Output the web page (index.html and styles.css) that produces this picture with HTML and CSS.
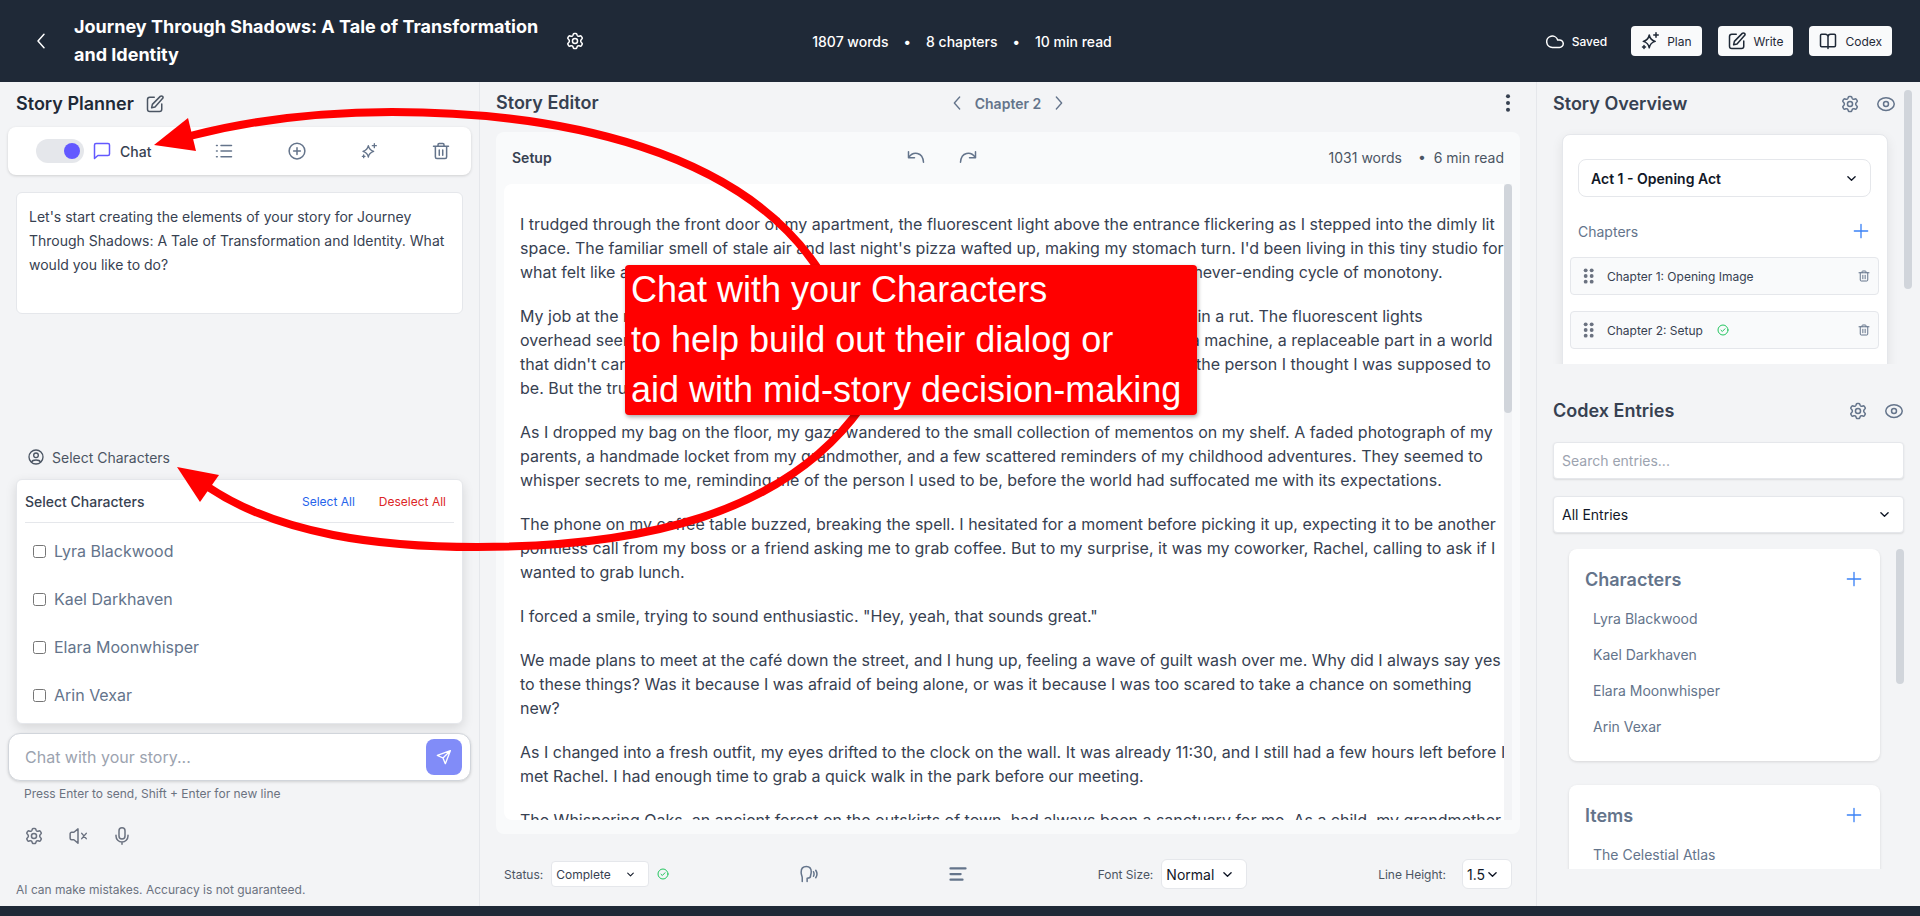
FILE: index.html
```html
<!DOCTYPE html>
<html lang="en">
<head>
  <meta charset="UTF-8">
  <meta name="viewport" content="width=device-width, initial-scale=1.0">
  <title>Journey Through Shadows</title>
  <link rel="stylesheet" href="styles.css">
</head>
<body>

  <!-- icon set -->
  <svg class="sprite" aria-hidden="true">
    <symbol id="i-gear" viewBox="0 0 24 24">
      <path d="M21.3 7.1L20.8 6.3C20.45 5.64 20.26 5.3 19.95 5.18C19.63 5.05 19.27 5.16 18.55 5.36L17.33 5.7C16.87 5.81 16.39 5.75 15.97 5.53L15.64 5.34C15.28 5.11 15 4.77 14.85 4.37L14.51 3.38C14.29 2.72 14.18 2.39 13.92 2.2C13.66 2 13.31 2 12.62 2H11.5C10.81 2 10.46 2 10.2 2.2C9.94 2.39 9.83 2.72 9.61 3.38L9.28 4.37C9.12 4.77 8.85 5.11 8.49 5.34L8.15 5.53C7.73 5.75 7.25 5.81 6.79 5.7L5.57 5.36C4.86 5.16 4.5 5.05 4.18 5.18C3.86 5.3 3.67 5.64 3.3 6.28L2.8 7.14C2.46 7.75 2.28 8.05 2.32 8.38C2.35 8.7 2.58 8.96 3.05 9.48L4.08 10.63C4.34 10.95 4.52 11.5 4.52 12C4.52 12.5 4.34 13.06 4.08 13.38L3.05 14.54C2.58 15.06 2.35 15.32 2.32 15.64C2.28 15.96 2.46 16.27 2.8 16.87L3.3 17.73C3.67 18.38 3.86 18.7 4.18 18.83C4.5 18.96 4.86 18.86 5.57 18.66L6.79 18.31C7.25 18.2 7.73 18.27 8.15 18.48L8.49 18.68C8.85 18.9 9.12 19.24 9.28 19.64L9.61 20.64C9.83 21.3 9.94 21.63 10.2 21.82C10.46 22 10.81 22 11.5 22H12.62C13.31 22 13.66 22 13.92 21.82C14.18 21.63 14.29 21.3 14.51 20.64L14.85 19.64C15 19.24 15.28 18.9 15.64 18.68L15.97 18.48C16.39 18.27 16.87 18.2 17.33 18.31L18.55 18.66C19.27 18.86 19.63 18.96 19.95 18.83C20.26 18.7 20.45 18.38 20.82 17.73L21.32 16.87C21.67 16.27 21.84 15.96 21.8 15.64C21.77 15.32 21.54 15.06 21.07 14.54L20.04 13.38C19.79 13.06 19.6 12.5 19.6 12C19.6 11.5 19.79 10.95 20.04 10.63L21.07 9.48C21.54 8.96 21.77 8.7 21.8 8.38C21.84 8.05 21.67 7.75 21.3 7.1Z"/>
      <circle cx="12" cy="12" r="3.4"/>
    </symbol>
    <symbol id="i-left" viewBox="0 0 24 24"><path d="M16 3L8 12l8 9"/></symbol>
    <symbol id="i-right" viewBox="0 0 24 24"><path d="M8 3l8 9-8 9"/></symbol>
    <symbol id="i-cloud" viewBox="0 0 24 24"><path d="M18 20.500H8.500a7.500 7.500 0 1 1 7-10H18a5 5 0 1 1 0 10z"/></symbol>
    <symbol id="i-edit" viewBox="0 0 24 24"><path d="M11 3H5a3 3 0 0 0-3 3v13a3 3 0 0 0 3 3h13a3 3 0 0 0 3-3v-7"/><path d="M19 1.8a2 2 0 0 1 3 3L12 16l-4.5 1 1-4.500z"/></symbol>
    <symbol id="i-book" viewBox="0 0 24 24"><path d="M12 6.500v15.500M12 19.500H3.500a1.500 1.500 0 0 1-1.500-1.500V4.500A1.500 1.500 0 0 1 3.500 3H8.500A3.500 3.500 0 0 1 12 6.500 3.500 3.500 0 0 1 15.500 3h5A1.500 1.500 0 0 1 22 4.500V18a1.500 1.500 0 0 1-1.500 1.500z"/></symbol>
    <symbol id="i-sparkles" viewBox="0 0 24 24"><path d="M11 4c1 5.200 2.800 7 8 8.500-5.200 1.500-7 3.300-8 8.500-1-5.200-2.800-7-8-8.500 5.200-1.500 7-3.300 8-8.500z"/><path d="M20 1v6M17 4h6M4 18v4M2 20h4"/></symbol>
    <symbol id="i-chat" viewBox="0 0 24 24"><path d="M22 16a2 2 0 0 1-2 2H6.500L2 22V4a2 2 0 0 1 2-2h16a2 2 0 0 1 2 2z"/></symbol>
    <symbol id="i-list" viewBox="0 0 24 24"><path d="M8 4.500h14M8 12h14M8 19.500h14M2 4.500h1M2 12h1M2 19.500h1"/></symbol>
    <symbol id="i-add" viewBox="0 0 24 24"><circle cx="12" cy="12" r="10.500"/><path d="M12 7.500v9M7.500 12h9"/></symbol>
    <symbol id="i-trash" viewBox="0 0 24 24"><path d="M2 5.500h20M4.500 5.500V20a2 2 0 0 0 2 2h11a2 2 0 0 0 2-2V5.500M8 5.500V3.500A1.500 1.500 0 0 1 9.500 2h5A1.500 1.500 0 0 1 16 3.500v2M9.700 10.500v7M14.300 10.500v7"/></symbol>
    <symbol id="i-user" viewBox="0 0 24 24"><circle cx="12" cy="12" r="10.500"/><circle cx="12" cy="9.500" r="3.500"/><path d="M5.500 19.500c1.500-4 11.500-4 13 0"/></symbol>
    <symbol id="i-send" viewBox="0 0 24 24"><path d="M21.500 2.500L2 9.500l8.500 4L14 22z M21.500 2.500l-11 11"/></symbol>
    <symbol id="i-mute" viewBox="0 0 24 24"><path d="M12 2.500v19L6.500 17H3.500A2 2 0 0 1 1.500 15V9a2 2 0 0 1 2-2h3zM17 8.500l6 7M23 8.500l-6 7"/></symbol>
    <symbol id="i-mic" viewBox="0 0 24 24"><rect x="8" y="1" width="8" height="15" rx="4"/><path d="M4 11v1a8 8 0 0 0 16 0v-1M12 20v3"/></symbol>
    <symbol id="i-undo" viewBox="0 0 24 24"><path d="M2 5v8h8M2.500 12.500C8 4 21 5 22 19"/></symbol>
    <symbol id="i-redo" viewBox="0 0 24 24"><path d="M22 5v8h-8M21.500 12.500C16 4 3 5 2 19"/></symbol>
    <symbol id="i-eye" viewBox="0 0 24 24"><path d="M1 12c0-4 5-8.500 11-8.500S23 8 23 12s-5 8.500-11 8.500S1 16 1 12z"/><circle cx="12" cy="12" r="3.300"/></symbol>
    <symbol id="i-plus" viewBox="0 0 24 24"><path d="M12 2v20M2 12h20"/></symbol>
    <symbol id="i-check" viewBox="0 0 24 24"><circle cx="12" cy="12" r="10"/><path d="M8 12.500l2.700 2.500L16 9.500"/></symbol>
    <symbol id="i-voice" viewBox="0 0 24 24"><path d="M3 22v-5c0-2-1.500-4-1.500-7.500C1.500 4 5 2 8.500 2c4 0 6.500 3 6.500 7 0 3-1 4-1 6s-1 2.500-4.500 2.500V22M18 9c1 2 1 4 0 6M21 7c2 3 2 7 0 10"/></symbol>
    <symbol id="i-align" viewBox="0 0 24 24"><path d="M2 4.500h20M2 12h13.500M2 19.500h16"/></symbol>
    <symbol id="i-dots" viewBox="0 0 24 24"><circle cx="12" cy="3" r="2.700"/><circle cx="12" cy="12" r="2.700"/><circle cx="12" cy="21" r="2.700"/></symbol>
    <symbol id="i-grip" viewBox="0 0 24 24"><circle cx="7" cy="3.500" r="2.900"/><circle cx="16" cy="3.500" r="2.900"/><circle cx="7" cy="12" r="2.900"/><circle cx="16" cy="12" r="2.900"/><circle cx="7" cy="20.500" r="2.900"/><circle cx="16" cy="20.500" r="2.900"/></symbol>
  </svg>

  <header class="topbar">
    <div class="topbar-left">
      <button class="icon-btn" aria-label="Back"><svg class="icon"><use href="#i-left"/></svg></button>
      <h1>Journey Through Shadows: A Tale of Transformation and Identity</h1>
      <button class="icon-btn" aria-label="Story settings"><svg class="icon"><use href="#i-gear"/></svg></button>
    </div>
    <div class="topbar-stats">
      <span>1807 words</span><span>•</span><span>8 chapters</span><span>•</span><span>10 min read</span>
    </div>
    <div class="topbar-right">
      <span class="saved"><svg class="icon"><use href="#i-cloud"/></svg>Saved</span>
      <button class="mode-btn"><svg class="icon"><use href="#i-sparkles"/></svg>Plan</button>
      <button class="mode-btn"><svg class="icon"><use href="#i-edit"/></svg>Write</button>
      <button class="mode-btn"><svg class="icon"><use href="#i-book"/></svg>Codex</button>
    </div>
  </header>

  <main class="layout">

    <!-- planner -->
    <section class="planner">
      <div class="planner-head">
        <h2>Story Planner</h2>
        <button class="icon-btn" aria-label="Edit"><svg class="icon"><use href="#i-edit"/></svg></button>
      </div>
      <div class="toolbar">
        <label class="chat-toggle">
          <input type="checkbox" class="switch" checked>
          <svg class="icon chat-icon"><use href="#i-chat"/></svg>
          Chat
        </label>
        <button class="icon-btn" aria-label="List"><svg class="icon"><use href="#i-list"/></svg></button>
        <button class="icon-btn" aria-label="Add"><svg class="icon"><use href="#i-add"/></svg></button>
        <button class="icon-btn" aria-label="Generate"><svg class="icon icon-sm"><use href="#i-sparkles"/></svg></button>
        <button class="icon-btn" aria-label="Delete"><svg class="icon"><use href="#i-trash"/></svg></button>
      </div>
      <div class="message">Let's start creating the elements of your story for Journey Through Shadows: A Tale of Transformation and Identity. What would you like to do?</div>

      <button class="select-toggle"><svg class="icon icon-sm"><use href="#i-user"/></svg>Select Characters</button>
      <div class="picker">
        <div class="picker-head">
          <h3>Select Characters</h3>
          <button class="link-blue">Select All</button>
          <button class="link-red">Deselect All</button>
        </div>
        <div class="picker-list">
          <label><input type="checkbox">Lyra Blackwood</label>
          <label><input type="checkbox">Kael Darkhaven</label>
          <label><input type="checkbox">Elara Moonwhisper</label>
          <label><input type="checkbox">Arin Vexar</label>
        </div>
      </div>
      <div class="composer">
        <input type="text" placeholder="Chat with your story..." aria-label="Chat with your story">
        <button class="send" aria-label="Send"><svg class="icon icon-sm"><use href="#i-send"/></svg></button>
      </div>
      <p class="hint">Press Enter to send, Shift + Enter for new line</p>
      <div class="planner-tools">
        <button class="icon-btn" aria-label="Settings"><svg class="icon"><use href="#i-gear"/></svg></button>
        <button class="icon-btn" aria-label="Mute"><svg class="icon"><use href="#i-mute"/></svg></button>
        <button class="icon-btn" aria-label="Microphone"><svg class="icon"><use href="#i-mic"/></svg></button>
      </div>
      <p class="disclaimer">AI can make mistakes. Accuracy is not guaranteed.</p>
    </section>

    <!-- editor -->
    <section class="editor">
      <div class="editor-head">
        <h2>Story Editor</h2>
        <div class="chapter-nav">
          <button class="icon-btn" aria-label="Previous chapter"><svg class="icon icon-sm"><use href="#i-left"/></svg></button>
          <span>Chapter 2</span>
          <button class="icon-btn" aria-label="Next chapter"><svg class="icon icon-sm"><use href="#i-right"/></svg></button>
        </div>
        <button class="icon-btn more" aria-label="More"><svg class="icon solid"><use href="#i-dots"/></svg></button>
      </div>
      <div class="page">
        <div class="page-head">
          <h3>Setup</h3>
          <div class="history">
            <button class="icon-btn" aria-label="Undo"><svg class="icon"><use href="#i-undo"/></svg></button>
            <button class="icon-btn" aria-label="Redo"><svg class="icon"><use href="#i-redo"/></svg></button>
          </div>
          <div class="page-stats"><span>1031 words</span><span>•&nbsp; 6 min read</span></div>
        </div>
        <div class="page-body">
          <div class="prose">
            <p>I trudged through the front door of my apartment, the fluorescent light above the entrance flickering as I stepped into the dimly lit<br>space. The familiar smell of stale air and last night's pizza wafted up, making my stomach turn. I'd been living in this tiny studio for<br>what felt like an eternity, and each day was beginning to blend into the next, trapped in a never-ending cycle of monotony.</p>
            <p>My job at the marketing firm was no better, and lately I had only felt more and more stuck in a rut. The fluorescent lights<br>overhead seemed to hum along with my own unhappiness. I was really only a tiny cog in a machine, a replaceable part in a world<br>that didn't care about me or any of my ambitions. I wondered what had ever happened to the person I thought I was supposed to<br>be. But the truth was, I had no idea who that person was.</p>
            <p>As I dropped my bag on the floor, my gaze wandered to the small collection of mementos on my shelf. A faded photograph of my<br>parents, a handmade locket from my grandmother, and a few scattered reminders of my childhood adventures. They seemed to<br>whisper secrets to me, reminding me of the person I used to be, before the world had suffocated me with its expectations.</p>
            <p>The phone on my coffee table buzzed, breaking the spell. I hesitated for a moment before picking it up, expecting it to be another<br>pointless call from my boss or a friend asking me to grab coffee. But to my surprise, it was my coworker, Rachel, calling to ask if I<br>wanted to grab lunch.</p>
            <p>I forced a smile, trying to sound enthusiastic. "Hey, yeah, that sounds great."</p>
            <p>We made plans to meet at the café down the street, and I hung up, feeling a wave of guilt wash over me. Why did I always say yes<br>to these things? Was it because I was afraid of being alone, or was it because I was too scared to take a chance on something<br>new?</p>
            <p>As I changed into a fresh outfit, my eyes drifted to the clock on the wall. It was already 11:30, and I still had a few hours left before I<br>met Rachel. I had enough time to grab a quick walk in the park before our meeting.</p>
            <p>The Whispering Oaks, an ancient forest on the outskirts of town, had always been a sanctuary for me. As a child, my grandmother</p>
          </div>
          <div class="track page-track"><div class="thumb"></div></div>
        </div>
      </div>
      <div class="editor-foot">
        <div class="field">
          <label for="status">Status:</label>
          <select id="status" class="sel-status"><option>Complete</option></select>
          <svg class="icon icon-xs ok"><use href="#i-check"/></svg>
        </div>
        <button class="icon-btn" aria-label="Read aloud"><svg class="icon"><use href="#i-voice"/></svg></button>
        <button class="icon-btn" aria-label="Alignment"><svg class="icon thick"><use href="#i-align"/></svg></button>
        <div class="field">
          <label for="font-size">Font Size:</label>
          <select id="font-size" class="sel-size"><option>Normal</option></select>
        </div>
        <div class="field field-wide">
          <label for="line-height">Line Height:</label>
          <select id="line-height" class="sel-height"><option>1.5</option></select>
        </div>
      </div>
    </section>

    <!-- sidebar -->
    <aside class="sidebar">
      <section class="overview">
        <div class="overview-body">
          <div class="side-head">
            <h2>Story Overview</h2>
            <button class="icon-btn" aria-label="Overview settings"><svg class="icon"><use href="#i-gear"/></svg></button>
            <button class="icon-btn" aria-label="Toggle overview"><svg class="icon"><use href="#i-eye"/></svg></button>
          </div>
          <div class="act">
            <select class="sel-act" aria-label="Act"><option>Act 1 - Opening Act</option></select>
            <div class="act-head">
              <h3>Chapters</h3>
              <button class="icon-btn blue" aria-label="Add chapter"><svg class="icon icon-sm"><use href="#i-plus"/></svg></button>
            </div>
            <ul class="chapters">
              <li>
                <svg class="icon solid grip"><use href="#i-grip"/></svg>
                <span>Chapter 1: Opening Image</span>
                <button class="icon-btn" aria-label="Delete chapter 1"><svg class="icon icon-xs"><use href="#i-trash"/></svg></button>
              </li>
              <li>
                <svg class="icon solid grip"><use href="#i-grip"/></svg>
                <span>Chapter 2: Setup</span>
                <svg class="icon icon-xs ok"><use href="#i-check"/></svg>
                <button class="icon-btn" aria-label="Delete chapter 2"><svg class="icon icon-xs"><use href="#i-trash"/></svg></button>
              </li>
            </ul>
          </div>
        </div>
        <div class="track overview-track"><div class="thumb"></div></div>
      </section>

      <section class="codex">
        <div class="codex-head">
          <h2>Codex Entries</h2>
          <button class="icon-btn" aria-label="Codex settings"><svg class="icon"><use href="#i-gear"/></svg></button>
          <button class="icon-btn" aria-label="Toggle codex"><svg class="icon"><use href="#i-eye"/></svg></button>
        </div>
        <input type="text" class="search" placeholder="Search entries..." aria-label="Search entries">
        <select class="sel-entries" aria-label="Entry type"><option>All Entries</option></select>
        <div class="entries">
          <div class="entries-list">
            <div class="group">
              <div class="group-head">
                <h3>Characters</h3>
                <button class="icon-btn blue" aria-label="Add character"><svg class="icon icon-sm"><use href="#i-plus"/></svg></button>
              </div>
              <ul>
                <li>Lyra Blackwood</li>
                <li>Kael Darkhaven</li>
                <li>Elara Moonwhisper</li>
                <li>Arin Vexar</li>
              </ul>
            </div>
            <div class="group">
              <div class="group-head">
                <h3>Items</h3>
                <button class="icon-btn blue" aria-label="Add item"><svg class="icon icon-sm"><use href="#i-plus"/></svg></button>
              </div>
              <ul>
                <li>The Celestial Atlas</li>
              </ul>
            </div>
          </div>
          <div class="track entries-track"><div class="thumb"></div></div>
        </div>
      </section>
    </aside>
  </main>

  <!-- tutorial callout with arrows -->
  <svg class="arrows" width="1920" height="916" viewBox="0 0 1920 916" aria-hidden="true">
    <path class="arrow-line" d="M190 136C256 119 320 112 392 112C560 112 745 150 822 275"/>
    <path class="arrow-head" d="M154 145L188 118L196 151z"/>
    <path class="arrow-line" d="M208 487C280 535 380 547 477 547C640 547 785 515 862 406"/>
    <path class="arrow-head" d="M177 467L219 475L200 502z"/>
  </svg>
  <div class="callout">Chat with your Characters<br>to help build out their dialog or<br>aid with mid-story decision-making</div>

</body>
</html>
```
FILE: styles.css
```css
* {
  box-sizing: border-box;
}
body {
  margin: 0;
  height: 100vh;
  display: flex;
  flex-direction: column;
  overflow: hidden;
  position: relative;
  padding-bottom: 10px;
  background: #1f2937;
  color: #374151;
  font-family: Inter, "Liberation Sans", sans-serif;
  font-size: 14px;
}
h1, h2, h3, p, ul {
  margin: 0;
  padding: 0;
}
ul {
  list-style: none;
}
button, input, select {
  font: inherit;
  color: inherit;
}
button {
  border: none;
  background: none;
  padding: 0;
  cursor: pointer;
}
h2 {
  font-size: 18px;
  line-height: 28px;
  font-weight: 600;
}
.sprite {
  position: absolute;
  width: 0;
  height: 0;
}
.icon {
  display: block;
  flex: none;
  width: 18px;
  height: 18px;
  overflow: visible;
  fill: none;
  stroke: currentColor;
  stroke-width: 2;
  stroke-linecap: round;
  stroke-linejoin: round;
}
.icon-sm {
  width: 16px;
  height: 16px;
}
.icon-xs {
  width: 12px;
  height: 12px;
}
.solid {
  fill: currentColor;
  stroke: none;
}
.thick {
  stroke-width: 3;
}
.icon-btn {
  display: flex;
  align-items: center;
  justify-content: center;
  color: #64748b;
}
.blue {
  color: #3b82f6;
}
.ok {
  color: #22c55e;
}

/* top bar */
.topbar {
  flex: none;
  height: 82px;
  display: flex;
  align-items: center;
  padding: 0 28px 0 32px;
  color: #fff;
}
.topbar .icon-btn {
  color: #fff;
}
.topbar-left {
  flex: 1;
  display: flex;
  align-items: center;
  gap: 16px;
}
.topbar-left .icon-btn:first-child {
  margin-right: 8px;
}
h1 {
  max-width: 476px;
  font-size: 18px;
  line-height: 28px;
  font-weight: 700;
}
.topbar-stats {
  display: flex;
  gap: 15px;
  font-weight: 500;
}
.topbar-right {
  flex: 1;
  display: flex;
  align-items: center;
  justify-content: flex-end;
  gap: 16px;
  font-size: 12px;
}
.saved {
  display: flex;
  align-items: center;
  gap: 8px;
  margin-right: 8px;
  font-weight: 500;
}
.mode-btn {
  display: flex;
  align-items: center;
  gap: 8px;
  height: 30px;
  padding: 0 10px;
  border-radius: 4px;
  background: #f9fafb;
  color: #1f2937;
}

/* columns */
.layout {
  flex: 1;
  min-height: 0;
  display: grid;
  grid-template-columns: 25fr 55fr 20fr;
  background: #f3f4f6;
}
.layout > * {
  min-width: 0;
  min-height: 0;
  display: flex;
  flex-direction: column;
}

/* planner */
.planner {
  border-right: 1px solid #e5e7eb;
  padding: 0 8px 8px;
}
.planner-head {
  height: 45px;
  display: flex;
  align-items: center;
  gap: 12px;
  padding: 0 8px 2px;
  color: #1f2937;
}
.planner-head .icon-btn {
  color: #4b5563;
}
.toolbar {
  height: 48px;
  display: flex;
  align-items: center;
  justify-content: space-between;
  padding: 0 21px 0 28px;
  border-radius: 8px;
  background: #fff;
  box-shadow: 0 1px 3px rgba(0, 0, 0, 0.15);
}
.chat-toggle {
  display: flex;
  align-items: center;
  gap: 9px;
  padding-right: 8px;
  font-weight: 500;
}
.switch {
  appearance: none;
  display: flex;
  justify-content: flex-end;
  width: 48px;
  height: 24px;
  margin: 0;
  padding: 4px;
  border-radius: 12px;
  background: #e5e7eb;
}
.switch::before {
  content: "";
  width: 16px;
  height: 16px;
  border-radius: 50%;
  background: #6359ff;
}
.chat-icon {
  color: #6359ff;
}
.message {
  min-height: 122px;
  margin: 17px 8px auto;
  padding: 12px;
  border: 1px solid #e5e7eb;
  border-radius: 6px;
  background: #fff;
  line-height: 24px;
}
.select-toggle {
  display: flex;
  align-items: center;
  align-self: flex-start;
  gap: 8px;
  height: 44px;
  padding-left: 20px;
  color: #4b5563;
}
.picker {
  margin: 0 8px 9px;
  padding: 0 8px;
  border: 1px solid #e5e7eb;
  border-radius: 6px;
  background: #fff;
  box-shadow: 0 4px 12px rgba(0, 0, 0, 0.12);
}
.picker-head {
  display: flex;
  align-items: center;
  gap: 24px;
  height: 43px;
  padding-right: 8px;
  border-bottom: 1px solid #e5e7eb;
  font-size: 12px;
}
.picker-head h3 {
  flex: 1;
  font-size: 14px;
  font-weight: 500;
}
.link-blue {
  color: #2563eb;
}
.link-red {
  color: #dc2626;
}
.picker-list {
  padding: 4px 8px;
}
.picker-list label {
  display: flex;
  align-items: center;
  gap: 8px;
  height: 48px;
  font-size: 16px;
  color: #64748b;
}
.picker-list input {
  width: 13px;
  height: 13px;
  margin: 0;
}
.composer {
  display: flex;
  align-items: center;
  height: 48px;
  padding: 0 8px 0 16px;
  border: 1px solid #d1d5db;
  border-radius: 12px;
  background: #fff;
  box-shadow: 0 1px 3px rgba(0, 0, 0, 0.15);
}
.composer input {
  flex: 1;
  min-width: 0;
  border: none;
  padding: 0;
  outline: none;
  font-size: 16px;
}
::placeholder {
  color: #9ca3af;
}
.send {
  display: flex;
  align-items: center;
  justify-content: center;
  width: 36px;
  height: 36px;
  border-radius: 8px;
  background: #818cf8;
  color: #fff;
}
.hint, .disclaimer {
  font-size: 12px;
  line-height: 16px;
  color: #6b7280;
}
.hint {
  margin: 5px 16px 24px;
}
.planner-tools {
  display: flex;
  gap: 26px;
  height: 20px;
  padding-left: 17px;
}
.planner-tools .icon-btn {
  color: #6b7280;
}
.disclaimer {
  margin: 36px 8px 0;
}

/* editor */
.editor {
  padding: 0 16px;
}
.editor-head {
  display: grid;
  grid-template-columns: 1fr auto 1fr;
  align-items: center;
  height: 50px;
  padding-bottom: 8px;
}
.chapter-nav {
  display: flex;
  align-items: center;
  gap: 10px;
  font-weight: 600;
  color: #64748b;
}
.more {
  justify-self: end;
  margin-right: 3px;
  color: #374151;
}
.page {
  flex: 1;
  min-height: 0;
  display: flex;
  flex-direction: column;
  padding: 0 8px 14px;
  border-radius: 8px;
  background: #f9fafb;
}
.page-head {
  flex: none;
  display: grid;
  grid-template-columns: 1fr auto 1fr;
  align-items: center;
  height: 52px;
  padding: 0 8px 2px;
}
.page-head h3 {
  font-size: 14px;
  font-weight: 600;
}
.history {
  display: flex;
  gap: 34px;
  margin-right: 132px;
}
.page-stats {
  display: flex;
  justify-content: flex-end;
  gap: 16px;
  color: #4b5563;
}
.page-body {
  flex: 1;
  min-height: 0;
  display: flex;
}
.prose {
  flex: 1;
  min-width: 0;
  overflow-x: visible;
  overflow-y: clip;
  padding: 28px 0 0 16px;
  border-radius: 8px 0 0 8px;
  background: #fff;
  font-size: 16px;
  line-height: 24px;
  white-space: nowrap;
}
.prose p {
  margin-bottom: 20px;
}
.track {
  flex: none;
  width: 8px;
}
.thumb {
  border-radius: 4px;
  background: #d1d5db;
}
.page-track {
  background: #f3f4f6;
}
.page-track .thumb {
  height: 36%;
}
.editor-foot {
  flex: none;
  display: flex;
  align-items: center;
  justify-content: space-between;
  height: 72px;
  padding: 8px 8px 0;
}
.field {
  display: flex;
  align-items: center;
  gap: 8px;
  font-size: 12px;
  color: #4b5563;
}
.field-wide {
  gap: 16px;
}
select {
  appearance: none;
  border: 1px solid #e5e7eb;
  border-radius: 4px;
  background: #fff url("data:image/svg+xml,%3Csvg xmlns='http://www.w3.org/2000/svg' viewBox='0 0 10 10' fill='none' stroke='%23111827' stroke-width='1.500' stroke-linecap='round' stroke-linejoin='round'%3E%3Cpath d='M1 3l4 4 4-4'/%3E%3C/svg%3E") no-repeat right 12px center / 9px 9px;
}
.sel-status {
  width: 98px;
  height: 26px;
  padding: 0 4px;
  background-size: 7px 7px;
  background-position: right 14px center;
  color: #374151;
}
.sel-size, .sel-height {
  width: 86px;
  height: 30px;
  padding: 0 4px;
  border-radius: 6px;
  font-size: 14px;
  color: #111827;
  background-position: right 14px center;
}
.sel-height {
  width: 50px;
}

/* sidebar */
.sidebar {
  border-left: 1px solid #e5e7eb;
}
.overview {
  flex: none;
  display: flex;
  height: 282px;
  padding-right: 8px;
}
.overview-body {
  flex: 1;
  min-width: 0;
  overflow: hidden;
}
.overview-track {
  padding-top: 8px;
}
.overview-track .thumb {
  height: 199px;
}
.side-head, .codex-head {
  display: flex;
  align-items: center;
  gap: 18px;
}
.side-head h2, .codex-head h2 {
  flex: 1;
}
.side-head {
  height: 52px;
  padding: 0 9px 8px 16px;
}
.act {
  margin: 0 16px 0 25px;
  padding: 24px 16px 24px 15px;
  border: 1px solid #e5e7eb;
  border-radius: 8px;
  background: #fff;
  box-shadow: 0 4px 12px rgba(0, 0, 0, 0.08);
}
.sel-act {
  display: block;
  width: 100%;
  height: 38px;
  padding: 0 12px;
  border-radius: 8px;
  font-weight: 600;
  color: #111827;
  background-position: right 14px center;
}
.act-head {
  display: flex;
  align-items: center;
  justify-content: space-between;
  height: 60px;
  padding: 8px 2px 0 0;
  color: #64748b;
}
.act-head h3 {
  font-size: 14px;
  font-weight: 400;
}
.chapters {
  display: flex;
  flex-direction: column;
  gap: 16px;
  margin: 0 -8px;
}
.chapters li {
  display: flex;
  align-items: center;
  height: 38px;
  padding: 0 8px;
  border: 1px solid #e5e7eb;
  border-radius: 4px;
  background: #f9fafb;
  font-size: 12px;
}
.chapters .grip {
  width: 20px;
  height: 16px;
  margin-right: 8px;
  color: #6b7280;
}
.chapters .ok {
  margin-left: 14px;
}
.chapters .icon-btn {
  margin-left: auto;
}
.codex {
  flex: 1;
  min-height: 0;
  display: flex;
  flex-direction: column;
  padding: 16px 16px 37px;
}
.codex-head {
  flex: none;
  height: 62px;
  padding-right: 1px;
}
.search, .sel-entries {
  flex: none;
  width: 100%;
  height: 37px;
  padding: 0 8px;
  border: 1px solid #e5e7eb;
  border-radius: 4px;
  background-color: #fff;
  box-shadow: 0 1px 2px rgba(0, 0, 0, 0.1);
}
.sel-entries {
  margin: 17px 0 16px;
  color: #111827;
  background-position: right 14px center;
}
.entries {
  flex: 1;
  min-height: 0;
  display: flex;
}
.entries-list {
  flex: 1;
  overflow: hidden;
  padding: 0 16px;
}
.entries-track .thumb {
  height: 135px;
}
.group {
  margin-bottom: 24px;
  padding: 8px 16px 16px;
  border-radius: 8px;
  background: #fff;
  box-shadow: 0 1px 3px rgba(0, 0, 0, 0.12);
  color: #64748b;
}
.group-head {
  display: flex;
  align-items: center;
  justify-content: space-between;
  height: 44px;
  padding-right: 2px;
}
.group h3 {
  font-size: 18px;
  font-weight: 600;
}
.group li {
  padding-left: 8px;
  line-height: 36px;
}

/* callout */
.arrows {
  position: absolute;
  top: 0;
  left: 0;
}
.arrow-line {
  fill: none;
  stroke: #f00;
  stroke-width: 8;
}
.arrow-head {
  fill: #f00;
}
.callout {
  position: absolute;
  top: 265px;
  left: 625px;
  width: 572px;
  padding: 0 6px;
  border-radius: 4px;
  background: #f00;
  box-shadow: 1px 2px 4px rgba(0, 0, 0, 0.35);
  color: #fff;
  font-family: "Liberation Sans", Arial, sans-serif;
  font-size: 36px;
  line-height: 50px;
  white-space: nowrap;
}
```
